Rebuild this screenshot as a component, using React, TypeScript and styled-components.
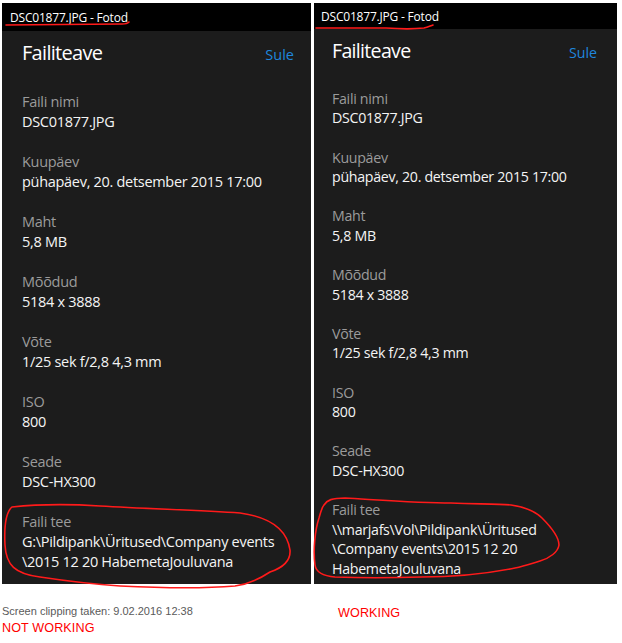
import React from "react";
import styled, { createGlobalStyle } from "styled-components";

const Global = createGlobalStyle`
  html, body { margin: 0; padding: 0; background: #ffffff; }
  body { font-family: "Open Sans", "Noto Sans", sans-serif; }
`;

const Page = styled.div`
  position: relative;
  width: 622px;
  height: 643px;
  padding: 3px 0 0 2px;
  box-sizing: border-box;
  overflow: hidden;
`;

const Panels = styled.div`
  display: flex;
  align-items: stretch;
  gap: 3px;
`;

const Panel = styled.section<{ $w: number }>`
  width: ${(p) => p.$w}px;
  background: #1c1c1c;
  display: flex;
  flex-direction: column;
`;

const TitleBar = styled.div<{ $h: number; $px: number }>`
  height: ${(p) => p.$h}px;
  background: #000;
  color: #fff;
  font-size: 12px;
  display: flex;
  align-items: center;
  padding-left: ${(p) => p.$px}px;
  letter-spacing: -0.2px;
`;

const Body = styled.div<{ $s: number; $pl: number; $pr: number; $pb: number }>`
  padding: ${(p) => 8 * p.$s}px ${(p) => p.$pr}px ${(p) => p.$pb}px ${(p) => p.$pl}px;
  display: flex;
  flex-direction: column;
`;

const Header = styled.div<{ $s: number }>`
  display: flex;
  justify-content: space-between;
  align-items: baseline;
  margin-bottom: ${(p) => 25 * p.$s}px;
`;

const Heading = styled.h1<{ $s: number }>`
  margin: 0;
  font-weight: 400;
  font-size: ${(p) => 20 * p.$s}px;
  line-height: ${(p) => 28 * p.$s}px;
  color: #fff;
  letter-spacing: -0.7px;
`;

const Close = styled.span<{ $s: number }>`
  color: #1f86dd;
  font-size: ${(p) => 14.5 * p.$s}px;
`;

const Group = styled.div<{ $s: number }>`
  display: flex;
  flex-direction: column;
  margin-bottom: ${(p) => 20 * p.$s}px;
  &:last-child { margin-bottom: 0; }
`;

const Label = styled.div<{ $s: number }>`
  color: #9b9b9b;
  font-size: ${(p) => 14.5 * p.$s}px;
  line-height: ${(p) => 20 * p.$s}px;
  letter-spacing: -0.3px;
`;

const Value = styled.div<{ $s: number }>`
  color: #f4f4f4;
  font-size: ${(p) => 14.5 * p.$s}px;
  line-height: ${(p) => 20 * p.$s}px;
  letter-spacing: -0.3px;
`;

const Footer = styled.div`
  display: flex;
  font-family: "Liberation Sans", Arial, sans-serif;
`;

const FootLeft = styled.div`
  width: 336px;
  padding-top: 19px;
  display: flex;
  flex-direction: column;
`;

const FootRight = styled.div`
  padding-top: 20px;
`;

const Clip = styled.div`
  color: #5a5a5a;
  font-size: 11px;
  line-height: 16px;
`;

const Status = styled.div`
  color: #ff0000;
  font-size: 12.6px;
  line-height: 18px;
  letter-spacing: 0.1px;
`;

const Overlay = styled.svg`
  position: absolute;
  left: 0;
  top: 0;
  pointer-events: none;
`;

type Field = { label: string; lines: string[] };

const common: Field[] = [
  { label: "Faili nimi", lines: ["DSC01877.JPG"] },
  { label: "Kuupäev", lines: ["pühapäev, 20. detsember 2015 17:00"] },
  { label: "Maht", lines: ["5,8 MB"] },
  { label: "Mõõdud", lines: ["5184 x 3888"] },
  { label: "Võte", lines: ["1/25 sek f/2,8 4,3 mm"] },
  { label: "ISO", lines: ["800"] },
  { label: "Seade", lines: ["DSC-HX300"] },
];

const leftFields: Field[] = [
  ...common,
  {
    label: "Faili tee",
    lines: ["G:\\Pildipank\\Üritused\\Company events", "\\2015 12 20 HabemetaJouluvana"],
  },
];

const rightFields: Field[] = [
  ...common,
  {
    label: "Faili tee",
    lines: ["\\\\marjafs\\Vol\\Pildipank\\Üritused", "\\Company events\\2015 12 20", "HabemetaJouluvana"],
  },
];

function InfoPanel(props: {
  w: number;
  s: number;
  barH: number;
  barPx: number;
  pl: number;
  pr: number;
  pb: number;
  fields: Field[];
}) {
  const { w, s, barH, barPx, pl, pr, pb, fields } = props;
  return (
    <Panel $w={w}>
      <TitleBar $h={barH} $px={barPx}>DSC01877.JPG - Fotod</TitleBar>
      <Body $s={s} $pl={pl} $pr={pr} $pb={pb}>
        <Header $s={s}>
          <Heading $s={s}>Failiteave</Heading>
          <Close $s={s}>Sule</Close>
        </Header>
        {fields.map((f) => (
          <Group $s={s} key={f.label}>
            <Label $s={s}>{f.label}</Label>
            {f.lines.map((l) => (
              <Value $s={s} key={l}>{l}</Value>
            ))}
          </Group>
        ))}
      </Body>
    </Panel>
  );
}

export default function App() {
  return (
    <>
      <Global />
      <Page>
        <Panels>
          <InfoPanel w={309} s={1} barH={28} barPx={8} pl={20} pr={17} pb={10} fields={leftFields} />
          <InfoPanel w={303} s={0.98} barH={26} barPx={7} pl={18} pr={20} pb={5} fields={rightFields} />
        </Panels>
        <Footer>
          <FootLeft>
            <Clip>Screen clipping taken: 9.02.2016 12:38</Clip>
            <Status>NOT WORKING</Status>
          </FootLeft>
          <FootRight>
            <Status>WORKING</Status>
          </FootRight>
        </Footer>
        <Overlay width="622" height="643" viewBox="0 0 622 643">
          <g fill="none" stroke="#ff1a1a" strokeWidth="1.6" strokeLinecap="round" strokeLinejoin="round">
            <path d="M6 25 C 40 25, 90 24, 122 24 C 126 24, 128 23, 129 22" />
            <path d="M316 28 C 340 28, 370 28, 386 28 C 400 29, 415 29, 424 28 C 428 27, 430 26, 433 25" />
            <path d="M12 507 C 40 504, 70 504, 100 506 C 150 509, 200 510, 240 513 C 270 517, 287 530, 290 550 C 291 562, 282 568, 270 572 C 258 580, 248 584, 235 586 C 200 589, 160 588, 120 586 C 90 584, 60 580, 40 577 C 15 574, 6 565, 5 545 C 4 525, 6 512, 12 507" />
            <path d="M324 505 C 327 500, 332 498, 345 498 C 380 500, 420 503, 451 503 C 480 504, 500 504, 511 505 C 525 507, 535 511, 542 518 C 552 528, 559 538, 559 545 C 558 552, 550 558, 540 561 C 530 564, 525 566, 515 568 C 480 575, 450 577, 421 577 C 390 578, 360 578, 335 577 C 322 576, 316 572, 315 565 C 313 550, 315 530, 319 518 C 321 511, 322 507, 324 505" />
          </g>
        </Overlay>
      </Page>
    </>
  );
}
